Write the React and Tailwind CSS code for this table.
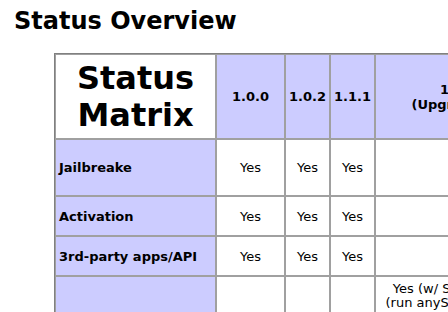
export default function App() {
  const cell = "border border-[#a0a0a0] px-[3px] py-[3px] align-middle";
  const head = `${cell} bg-[#ccccff] text-center font-bold`;
  const side = `${cell} bg-[#ccccff] text-left font-bold whitespace-nowrap`;
  const data = `${cell} bg-white text-center`;
  return (
    <div className="w-[448px] h-[312px] overflow-hidden bg-white text-black font-['DejaVu_Sans',Verdana,sans-serif]">
      <h2 className="pl-[14px] pt-[7px] text-[24px] leading-[28px] font-bold">Status Overview</h2>
      <div className="pl-[54px] pt-[18px]">
        <table className="table-fixed border-separate border-spacing-0 border border-[#808080] text-[13px] leading-[15px] w-[600px]">
          <colgroup>
            <col className="w-[161px]" />
            <col className="w-[69px]" />
            <col className="w-[45px]" />
            <col className="w-[45px]" />
            <col className="w-[167px]" />
            <col className="w-[113px]" />
          </colgroup>
          <tbody>
            <tr className="h-[85px]">
              <td className={`${cell} bg-white text-center font-bold text-[32px] leading-[37px]`}>
                Status
                <br />
                Matrix
              </td>
              <td className={head}>1.0.0</td>
              <td className={head}>1.0.2</td>
              <td className={head}>1.1.1</td>
              <td className={`${head} whitespace-nowrap`}>
                1.1.2
                <br />
                (Upgrade to)
              </td>
              <td className={head}>1.1.2</td>
            </tr>
            <tr className="h-[57px]">
              <td className={side}>Jailbreake</td>
              <td className={data}>Yes</td>
              <td className={data}>Yes</td>
              <td className={data}>Yes</td>
              <td className={data}></td>
              <td className={data}>Yes</td>
            </tr>
            <tr className="h-[40px]">
              <td className={side}>Activation</td>
              <td className={data}>Yes</td>
              <td className={data}>Yes</td>
              <td className={data}>Yes</td>
              <td className={data}></td>
              <td className={data}>Yes</td>
            </tr>
            <tr className="h-[40px]">
              <td className={side}>3rd-party apps/API</td>
              <td className={data}>Yes</td>
              <td className={data}>Yes</td>
              <td className={data}>Yes</td>
              <td className={data}></td>
              <td className={data}>Yes</td>
            </tr>
            <tr>
              <td className={side}></td>
              <td className={data}></td>
              <td className={data}></td>
              <td className={data}></td>
              <td className={`${data} whitespace-nowrap leading-[14px] pt-[5px]`}>
                Yes (w/ SIM unlocks)
                <br />
                (run anySIM 1.02 first)
                <br />
                on 1.1.1
                <br />
                only
              </td>
              <td className={data}>Yes</td>
            </tr>
          </tbody>
        </table>
      </div>
    </div>
  );
}
